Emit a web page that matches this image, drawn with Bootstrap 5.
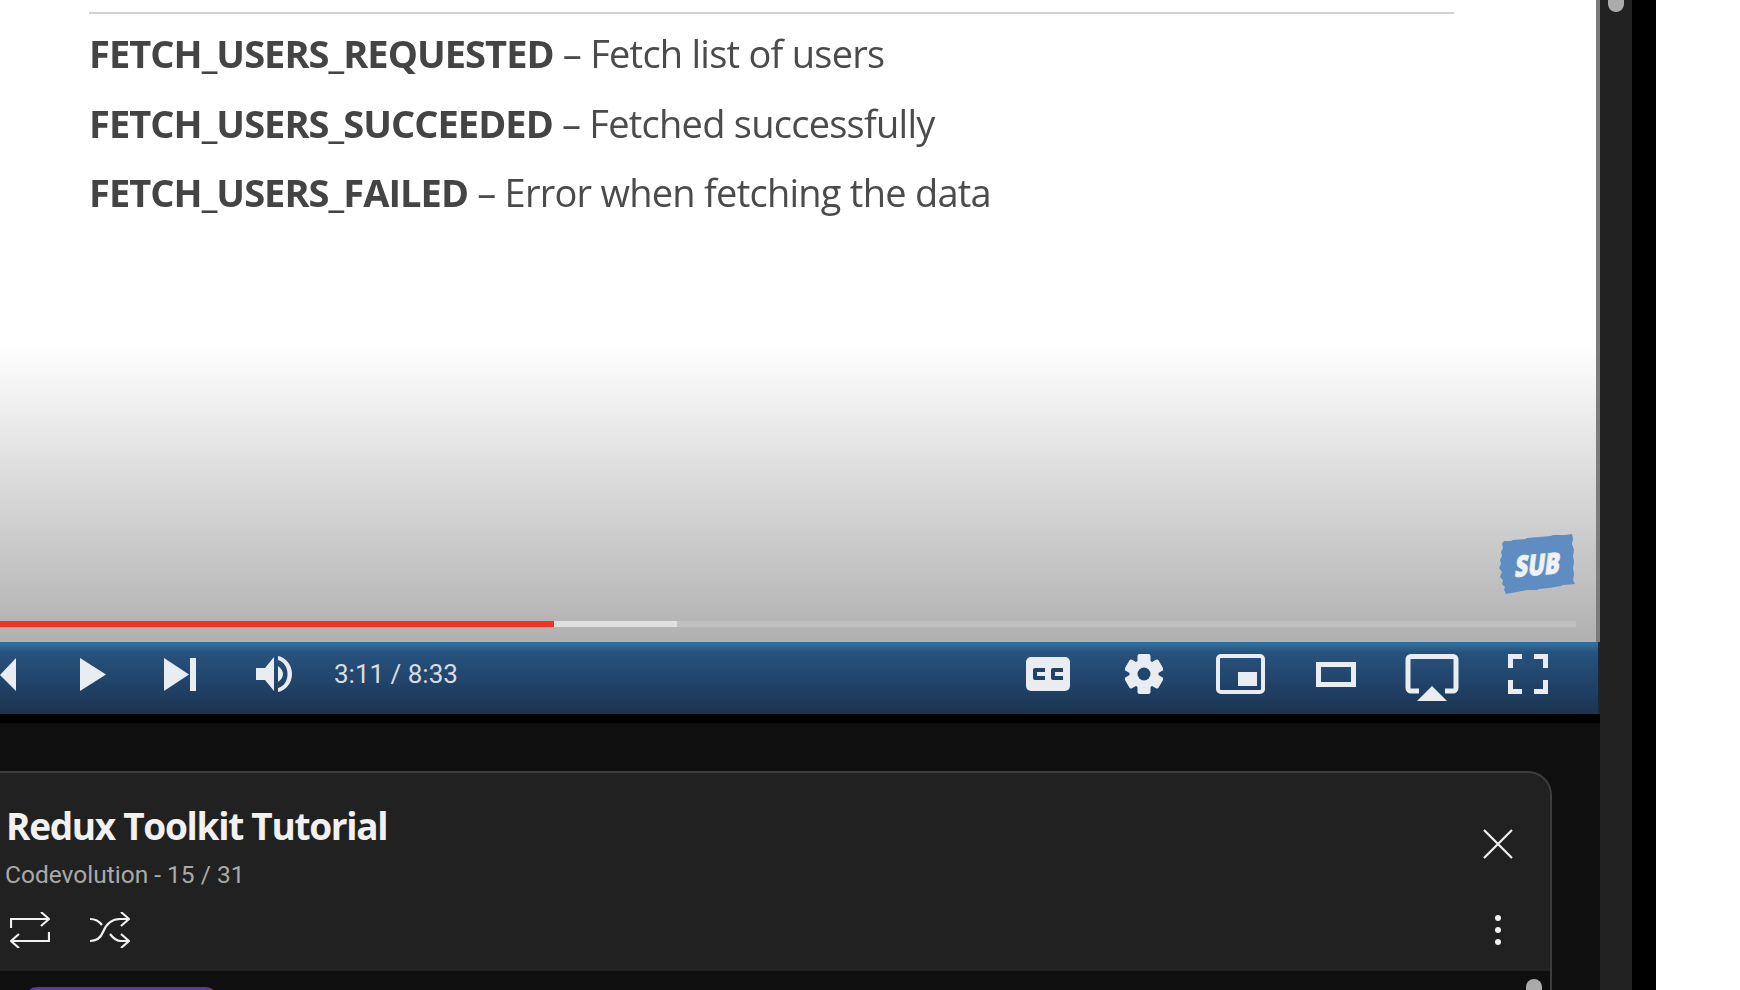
<!DOCTYPE html>
<html lang="en">
<head>
  <meta charset="UTF-8">
  <title>Redux Toolkit Tutorial</title>
  <link href="https://cdn.jsdelivr.net/npm/bootstrap@5.3.3/dist/css/bootstrap.min.css" rel="stylesheet">
  <style>
    html, body { height: 990px; overflow: hidden; background: #fff; }
    .shell { width: 1656px; height: 990px; background: #000; padding-right: 24px; }
    .page-main { width: 1600px; background: #0f0f0f; }
    .side-scroll { width: 32px; background: #212121; position: relative; }
    .side-thumb { position: absolute; left: 8px; top: -8px; width: 16px; height: 20px; border-radius: 8px; background: #aaa; }

    .player { height: 723px; background: #000; }
    .video-box { height: 714px; width: 1600px; position: relative; }
    .slide { height: 642px; padding-left: 89px; border-right: 4px solid #7c7c7c; background: linear-gradient(#fff 0, #fff 345px, #b0b0b0 642px); font-family: "Open Sans", sans-serif; color: #4b4b4b; }
    .slide-rule { width: 1365px; height: 2px; background: #d2d2d2; margin-top: 12px; margin-bottom: 5px; }
    .slide-line { font-size: 38px; line-height: 69.5px; height: 69.5px; white-space: nowrap; letter-spacing: -.75px; filter: blur(.4px); }
    .slide-line b { font-weight: 700; color: #444; letter-spacing: -.95px; }

    .track { position: absolute; left: 0; top: 621px; width: 1576px; height: 6px; background: #c0c0c0; }
    .track-buffer { height: 6px; width: 677px; background: #e0e0e0; position: relative; }
    .track-played { position: absolute; left: 0; top: 0; height: 6px; width: 554px; background: #f03325; }
    .sub-badge { position: absolute; left: 1499px; top: 534px; width: 76px; height: 60px; overflow: visible; }
    .sub-badge text { font-family: "Open Sans", sans-serif; font-weight: 800; font-size: 29px; fill: #eef1f5; stroke: #eef1f5; stroke-width: .8px; }

    .ctrl-bar { height: 72px; background: linear-gradient(#2f6c98 0, #2f6c98 3px, #27537e 10px, #1f3f63 50px, #1b3350 100%); padding-bottom: 8px; border-right: 2px solid #16283e; }
    .ctrl-bar svg { display: block; fill: #e9edf2; flex: none; }
    .ctrl-prev { margin-left: 0; width: 16px; height: 33px; }
    .ctrl-play { margin-left: 64px; width: 26px; height: 33px; }
    .ctrl-next { margin-left: 58px; width: 32px; height: 33px; }
    .ctrl-vol { margin-left: 60px; width: 36px; height: 36px; }
    .ctrl-time { margin-left: 42px; font-family: Roboto, sans-serif; font-size: 26px; color: #d8dde3; line-height: 1; }
    .ctrl-cc { margin-left: auto; width: 44px; height: 34px; }
    .ctrl-gear { margin-left: 55px; width: 38px; height: 40px; }
    .ctrl-mini { margin-left: 53px; width: 49px; height: 40px; }
    .ctrl-theatre { margin-left: 51px; width: 40px; height: 25px; }
    .ctrl-air { margin-left: 49px; width: 54px; height: 47px; margin-top: 6px; }
    .ctrl-full { margin-left: 49px; margin-right: 50px; width: 40px; height: 40px; }

    .pl-panel { width: 1552px; height: 200px; margin-top: 48px; background: #212121; border-top: 2px solid #3d3d3d; border-right: 2px solid #3d3d3d; border-top-right-radius: 24px; position: relative; padding: 0 0 0 6px; }
    .pl-title { font-family: "Open Sans", sans-serif; font-weight: 700; font-size: 37px; line-height: 44px; color: #f1f1f1; padding-top: 31px; letter-spacing: -1.3px; }
    .pl-meta { font-family: Roboto, sans-serif; font-size: 24.5px; line-height: 30px; color: #aaa; margin-top: 12px; margin-left: -1px; }
    .pl-icons { margin-top: 22px; margin-left: 4px; gap: 40px; }
    .pl-icons svg, .pl-close svg { display: block; fill: none; stroke: #f1f1f1; stroke-width: 2.2; }
    .pl-close { position: absolute; left: 1483px; top: 56px; }
    .pl-dots { position: absolute; left: 1495px; top: 142px; gap: 6px; }
    .pl-dots span { width: 6px; height: 6px; border-radius: 50%; background: #f1f1f1; display: block; }
    .pl-list { width: 1552px; height: 19px; position: relative; border-right: 2px solid #3d3d3d; }
    .pl-list-thumb { position: absolute; left: 25px; top: 16px; width: 193px; height: 20px; border-radius: 12px 12px 0 0; background: #5b3d93; }
    .pl-list-scroll { position: absolute; left: 1526px; top: 8px; width: 16px; height: 30px; border-radius: 8px; background: #aaa; }
  </style>
</head>
<body>

<div class="shell d-flex">
  <div class="page-main overflow-hidden">
    <div class="player">
      <div class="video-box">
        <div class="slide overflow-hidden">
          <div class="slide-rule"></div>
          <div class="slide-line"><b>FETCH_USERS_REQUESTED</b> – Fetch list of users</div>
          <div class="slide-line"><b>FETCH_USERS_SUCCEEDED</b> – Fetched successfully</div>
          <div class="slide-line"><b>FETCH_USERS_FAILED</b> – Error when fetching the data</div>
        </div>

        <svg class="sub-badge" viewBox="0 0 76 60">
          <polygon fill="#5f8dc2" points="5,7 12,7 14,6 26,5 28,4 40,3 52,2 54,1 66,1 73,0 74,5 73,10 75,16 74,22 75,28 74,34 75,40 74,46 76,50 64,51 62,52 50,54 40,55 38,56 28,56 18,58 12,59 7,60 5,56 6,53 3,50 4,46 1,43 3,38 0,34 2,30 1,26 3,22 2,18 4,14 3,10"/>
          <g transform="rotate(-5 38 30)">
            <text x="0" y="41" transform="translate(23 0) skewX(-12)" textLength="45" lengthAdjust="spacingAndGlyphs">SUB</text>
          </g>
        </svg>

        <div class="track">
          <div class="track-buffer"><div class="track-played"></div></div>
        </div>

        <div class="ctrl-bar d-flex align-items-center">
          <svg class="ctrl-prev" viewBox="0 0 16 33"><polygon points="16,0 16,33 0,17"/></svg>
          <svg class="ctrl-play" viewBox="0 0 26 33"><polygon points="0,0 26,16.5 0,33"/></svg>
          <svg class="ctrl-next" viewBox="0 0 32 33"><polygon points="0,0 25,16.5 0,33"/><rect x="26" y="0" width="6" height="33"/></svg>
          <svg class="ctrl-vol" viewBox="0 0 36 36">
            <polygon points="0,12 9,12 18,1 18,35 9,24 0,24"/>
            <path d="M22 10c3 2 5 5 5 8s-2 6-5 8z"/>
            <path d="M22 0c8 1.500 14 9 14 18s-6 16.500-14 18v-4c6-1.500 9.500-7.500 9.500-14s-3.500-12.500-9.500-14z"/>
          </svg>
          <span class="ctrl-time">3:11 / 8:33</span>

          <svg class="ctrl-cc" viewBox="0 0 44 34">
            <rect width="44" height="34" rx="5"/>
            <path fill="none" stroke="#1f4266" stroke-width="4" stroke-linejoin="round" d="M19 13H9v8h10M37 13H27v8h10"/>
          </svg>
          <svg class="ctrl-gear" viewBox="0 0 38 40">
            <g transform="translate(19 20)">
              <circle r="14.500"/>
              <rect x="-6.500" y="-20" width="13" height="40" rx="2"/>
              <rect x="-6.500" y="-20" width="13" height="40" rx="2" transform="rotate(60) scale(.97)"/>
              <rect x="-6.500" y="-20" width="13" height="40" rx="2" transform="rotate(120) scale(.97)"/>
              <circle r="6.500" fill="#21466c"/>
            </g>
          </svg>
          <svg class="ctrl-mini" viewBox="0 0 49 40">
            <rect x="2" y="2" width="45" height="36" rx="3" fill="none" stroke="#e9edf2" stroke-width="4"/>
            <rect x="22" y="18" width="19" height="14"/>
          </svg>
          <svg class="ctrl-theatre" viewBox="0 0 40 25"><rect x="2.500" y="2.500" width="35" height="20" fill="none" stroke="#e9edf2" stroke-width="5"/></svg>
          <svg class="ctrl-air" viewBox="0 0 54 47">
            <path fill="none" stroke="#e9edf2" stroke-width="5" d="M14 37H6a3 3 0 0 1-3-3V5.500a3 3 0 0 1 3-3h42a3 3 0 0 1 3 3V34a3 3 0 0 1-3 3h-8"/>
            <polygon points="27,32 12,47 42,47"/>
          </svg>
          <svg class="ctrl-full" viewBox="0 0 40 40">
            <path fill="none" stroke="#e9edf2" stroke-width="5" d="M2.500 14V2.500H14M26 2.500h11.500V14M37.500 26v11.500H26M14 37.500H2.500V26"/>
          </svg>
        </div>
      </div>
    </div>

    <div class="pl-panel">
      <div class="pl-title">Redux Toolkit Tutorial</div>
      <div class="pl-meta">Codevolution - 15 / 31</div>
      <div class="pl-icons d-flex">
        <svg width="40" height="36" viewBox="0 0 40 36">
          <path d="M1 16V7h38M31 0l8 7-8 7M39 20v9H1M9 22l-8 7 8 7"/>
        </svg>
        <svg width="40" height="36" viewBox="0 0 40 36">
          <path d="M0 29c8 0 11-4 13-9s7-13 17-13h9M0 7c5 0 9 2 12 6M20 22c3 4 6 7 11 7h8M31 0l8 7-8 7M31 22l8 7-8 7"/>
        </svg>
      </div>
      <div class="pl-close">
        <svg width="30" height="30" viewBox="0 0 30 30"><path d="M1 1l28 28M29 1L1 29"/></svg>
      </div>
      <div class="pl-dots d-flex flex-column"><span></span><span></span><span></span></div>
    </div>
    <div class="pl-list">
      <div class="pl-list-thumb"></div>
      <div class="pl-list-scroll"></div>
    </div>
  </div>

  <div class="side-scroll"><div class="side-thumb"></div></div>
</div>

<script src="https://cdn.jsdelivr.net/npm/bootstrap@5.3.3/dist/js/bootstrap.bundle.min.js"></script>
</body>
</html>
